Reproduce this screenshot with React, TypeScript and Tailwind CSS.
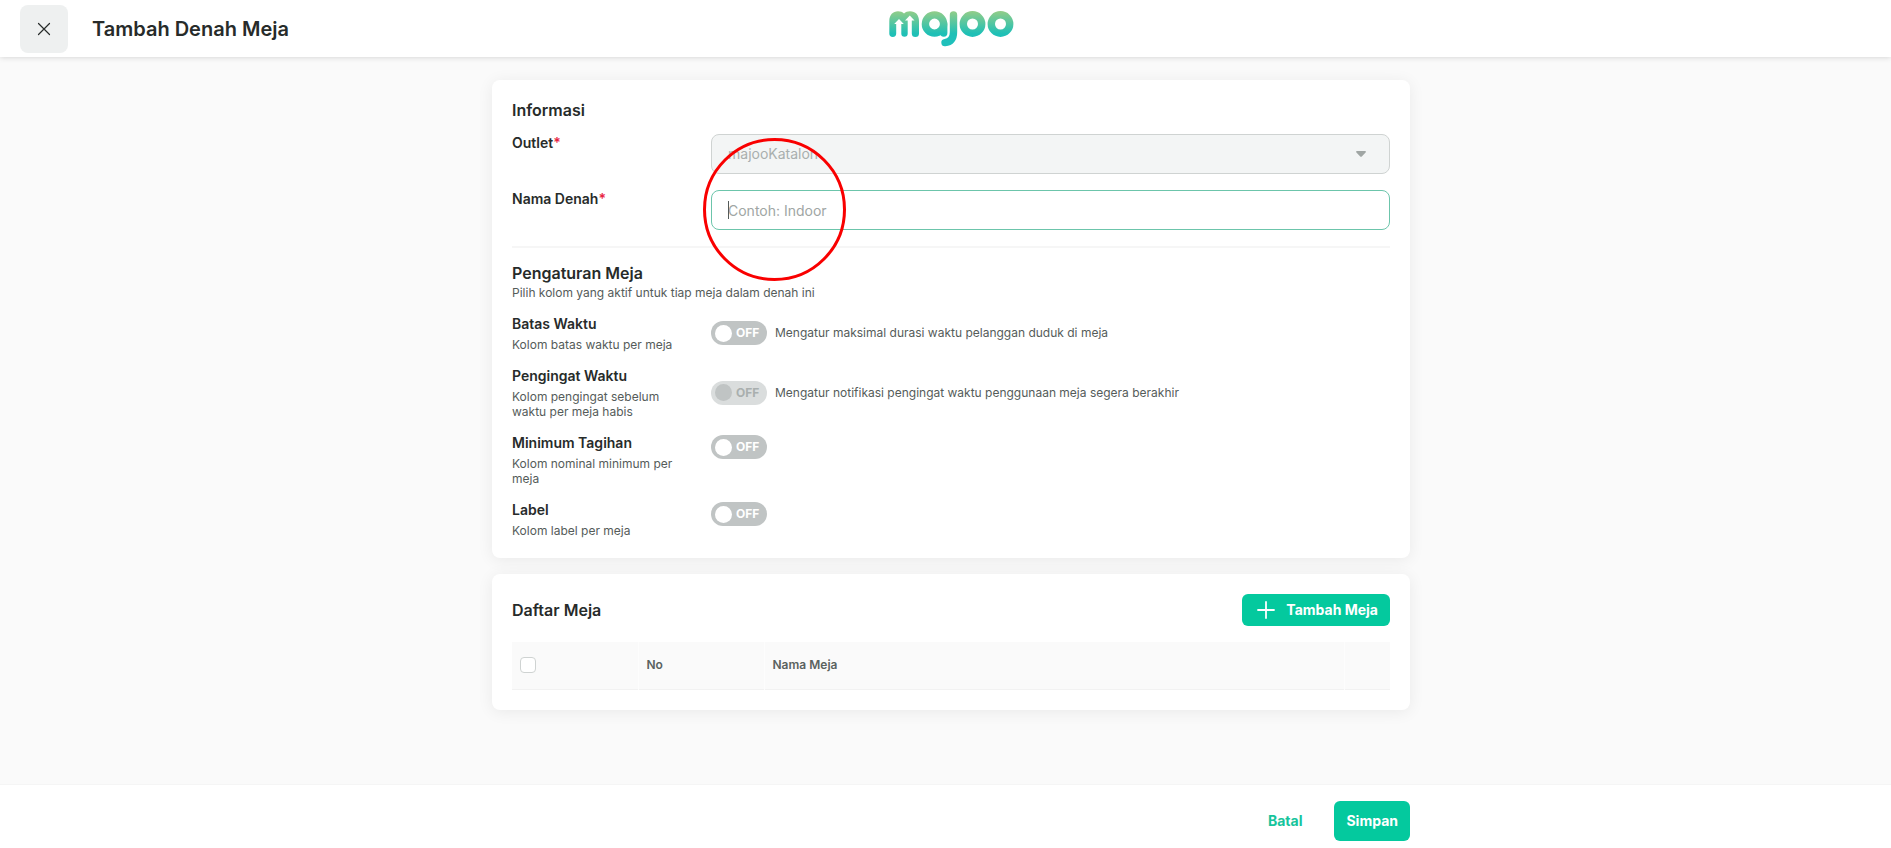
import { useState } from 'react'

const daftarPengaturan = [
    { id: 'batas', judul: 'Batas Waktu', ket: 'Kolom batas waktu per meja', info: 'Mengatur maksimal durasi waktu pelanggan duduk di meja', disabled: false },
    { id: 'pengingat', judul: 'Pengingat Waktu', ket: 'Kolom pengingat sebelum waktu per meja habis', info: 'Mengatur notifikasi pengingat waktu penggunaan meja segera berakhir', disabled: true },
    { id: 'minimum', judul: 'Minimum Tagihan', ket: 'Kolom nominal minimum per meja', info: '', disabled: false },
    { id: 'label', judul: 'Label', ket: 'Kolom label per meja', info: '', disabled: false },
]

function Logo() {
    return (
        <svg width="126" height="36" viewBox="0 0 126 36" fill="none" role="img" aria-label="majoo">
            <defs>
                <linearGradient id="majoo" gradientUnits="userSpaceOnUse" x1="0" y1="0" x2="0" y2="30">
                    <stop offset="0" stopColor="#93cd88" />
                    <stop offset="0.75" stopColor="#1fc0b6" />
                    <stop offset="1" stopColor="#1fc0bb" />
                </linearGradient>
            </defs>
            <path fill="url(#majoo)" d="M0.3 10C0.3 4 4 0.3 9 0.3C11.5 0.3 13.5 1 15 2.500C16.5 1 18.5 0.3 21 0.3C26.5 0.3 30 4 30 10V22.5A3.200 3.200 0 0 1 22.800 22.5V9.500H25.5L20.8 4.500L16 9.500H18.700V22.5A3.200 3.200 0 0 1 12.300 22.5V13H14.800L10 8L5.200 13H7.200V22.5A3.400 3.400 0 0 1 0.3 22.5Z" />
            <g stroke="url(#majoo)" strokeWidth="7.4" strokeLinecap="round">
                <circle cx="45.5" cy="13" r="9.1" />
                <path d="M54.700 13V22" />
                <path d="M64.5 4V21C64.5 27.500 61.500 31 56 31.600" />
                <circle cx="83.5" cy="13" r="9.2" />
                <circle cx="111.5" cy="13" r="9.2" />
            </g>
        </svg>
    )
}

function Toggle({ id, disabled }: { id: string; disabled: boolean }) {
    const [aktif, setAktif] = useState(false)
    return (
        <button
            id={id}
            type="button"
            role="switch"
            aria-checked={aktif}
            disabled={disabled}
            onClick={() => setAktif(!aktif)}
            className={`flex h-6 w-14 shrink-0 items-center gap-1 rounded-full px-1 text-xs font-bold ${disabled ? 'bg-[#dadddd] text-[#a9afae]' : aktif ? 'flex-row-reverse bg-[#04c99e] text-white' : 'bg-[#c0c4c4] text-white'}`}
        >
            <span className={`size-[17px] rounded-full ${disabled ? 'bg-[#c0c4c4]' : 'bg-white'}`} />
            {aktif ? 'ON' : 'OFF'}
        </button>
    )
}

export default function TambahDenahMeja() {
    const [nama, setNama] = useState('')

    return (
        <div className="flex min-h-screen flex-col bg-[#fafafa] font-['Inter','Liberation_Sans',sans-serif] text-[#272b2a]">
            <header className="grid h-[57px] grid-cols-[1fr_auto_1fr] items-center bg-white pr-2 pl-5 shadow-[0_0_6px_rgba(0,0,0,0.18)]">
                <div className="flex items-center gap-6">
                    <button type="button" aria-label="Tutup" className="flex size-12 items-center justify-center rounded-lg bg-[#eef0f0]">
                        <svg width="14" height="14" viewBox="0 0 14 14" stroke="#272b2a" strokeWidth="1.2" strokeLinecap="round">
                            <path d="M1.5 1.5L12.5 12.5M12.5 1.5L1.5 12.5" />
                        </svg>
                    </button>
                    <h1 className="text-xl font-semibold">Tambah Denah Meja</h1>
                </div>
                <Logo />
            </header>

            <main className="flex-1 pt-[23px] pr-4 pb-6 pl-[27px]">
                <div className="mx-auto flex max-w-[918px] flex-col gap-4">
                    <section className="rounded-lg bg-white p-5 shadow-[0_2px_16px_rgba(0,0,0,0.07)]">
                        <h2 className="text-base leading-5 font-semibold">Informasi</h2>
                        <div className="mt-[14px] flex flex-col gap-4">
                            <div className="flex items-start">
                                <label htmlFor="outlet" className="w-[199px] shrink-0 text-sm leading-[18px] font-semibold">Outlet<span className="text-[#e8233f]">*</span></label>
                                <div className="relative flex-1">
                                    <select id="outlet" disabled className="h-10 w-full appearance-none rounded-lg border border-[#cfd3d2] bg-[#f3f5f5] px-4 text-sm text-[#a9afae] opacity-100">
                                        <option>majooKatalon</option>
                                    </select>
                                    <svg className="absolute top-[17px] right-6" width="10" height="6" viewBox="0 0 10 6" fill="#a0a6a4">
                                        <path d="M1 0H9C10 0 10.2 0.8 9.6 1.4L5.8 5.4Q5 6.2 4.2 5.4L0.4 1.4C-0.2 0.8 0 0 1 0Z" />
                                    </svg>
                                </div>
                            </div>
                            <div className="flex items-start">
                                <label htmlFor="nama" className="w-[199px] shrink-0 text-sm leading-[18px] font-semibold">Nama Denah<span className="text-[#e8233f]">*</span></label>
                                <div className="relative flex-1">
                                    <input id="nama" type="text" placeholder="Contoh: Indoor" value={nama} onChange={(e) => setNama(e.target.value)} className="block h-10 w-full rounded-lg border border-[#6cc5ab] bg-white px-4 text-sm outline-none placeholder:text-[#a0a6a4]" />
                                    {nama === '' && <span className="pointer-events-none absolute top-[11px] left-[17px] h-[18px] w-px bg-[#555b59]" />}
                                    <span className="pointer-events-none absolute -top-[52px] -left-2 size-[143px] rounded-full border-3 border-[#f90000]" />
                                </div>
                            </div>
                        </div>

                        <hr className="mt-4 border-t-2 border-[#f6f6f6]" />

                        <h2 className="mt-[15px] text-base leading-5 font-semibold">Pengaturan Meja</h2>
                        <p className="mt-[2px] text-xs text-[#555c5a]">Pilih kolom yang aktif untuk tiap meja dalam denah ini</p>
                        <div className="mt-[13px] flex flex-col gap-[14px]">
                            {daftarPengaturan.map((p) => (
                                <div key={p.id} className={`flex ${p.info ? 'items-center' : 'items-start'}`}>
                                    <div className="w-[199px] shrink-0 pr-8">
                                        <label htmlFor={p.id} className="block text-sm font-semibold">{p.judul}</label>
                                        <p className="mt-[3px] text-xs leading-[15px] text-[#555c5a]">{p.ket}</p>
                                    </div>
                                    <div className={`flex items-center gap-2 ${p.info ? '' : 'pt-[2px]'}`}>
                                        <Toggle id={p.id} disabled={p.disabled} />
                                        {p.info && <p className="text-xs text-[#555c5a]">{p.info}</p>}
                                    </div>
                                </div>
                            ))}
                        </div>
                    </section>

                    <section className="rounded-lg bg-white p-5 shadow-[0_2px_16px_rgba(0,0,0,0.07)]">
                        <div className="flex items-center justify-between">
                            <h2 className="text-base font-semibold">Daftar Meja</h2>
                            <button type="button" className="flex h-8 items-center gap-[11px] rounded-md bg-[#04c99e] pr-3 pl-[15px] text-sm font-bold text-white">
                                <svg width="18" height="18" viewBox="0 0 18 18" stroke="currentColor" strokeWidth="1.8" strokeLinecap="round">
                                    <path d="M9 1V17M1 9H17" />
                                </svg>
                                Tambah Meja
                            </button>
                        </div>
                        <table className="mt-4 w-full table-fixed bg-[#fafafa] text-left text-xs text-[#5a6260]">
                            <thead>
                                <tr className="h-[47px] border-b border-[#f2f2f2]">
                                    <th className="w-[126px] border-r border-[#fdfdfd] px-2">
                                        <input type="checkbox" aria-label="Pilih semua meja" className="block size-4 appearance-none rounded-sm border border-[#cfd3d2] bg-white checked:bg-[#04c99e]" />
                                    </th>
                                    <th className="w-[126px] border-r border-[#fdfdfd] px-2 font-semibold">No</th>
                                    <th className="border-r border-[#fdfdfd] px-2 font-semibold">Nama Meja</th>
                                    <th className="w-[46px]" />
                                </tr>
                            </thead>
                        </table>
                    </section>
                </div>
            </main>

            <footer className="border-t border-[#f5f5f5] bg-white pt-4 pr-4 pb-[7px] pl-[27px]">
                <div className="mx-auto flex max-w-[918px] justify-end gap-5">
                    <button type="button" className="h-10 px-3 text-sm font-bold text-[#16c49c]">Batal</button>
                    <button type="button" className="h-10 rounded-md bg-[#04c99e] px-3 text-sm font-bold text-white">Simpan</button>
                </div>
            </footer>
        </div>
    )
}
